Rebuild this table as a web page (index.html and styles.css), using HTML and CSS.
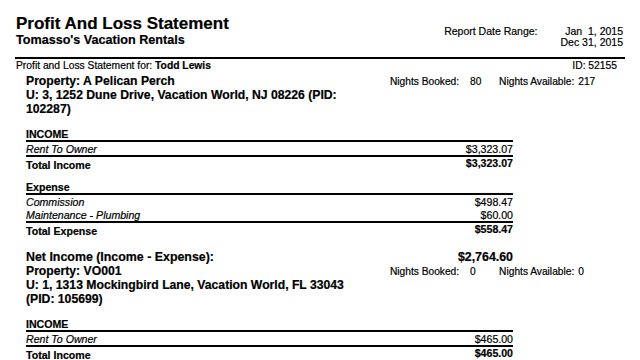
FILE: index.html
```
<!DOCTYPE html>
<html>
<head>
<meta charset="utf-8">
<link rel="stylesheet" href="styles.css">
</head>
<body>
<div class="page">
  <header class="top">
    <div class="titles">
      <h1 class="title">Profit And Loss Statement</h1>
      <h2 class="subtitle">Tomasso's Vacation Rentals</h2>
    </div>
    <div class="range">
      <span class="range-label">Report Date Range:</span>
      <div class="dates"><div>Jan&nbsp;&nbsp;1, 2015</div><div>Dec 31, 2015</div></div>
    </div>
  </header>
  <div class="rule"></div>
  <div class="forline">
    <span>Profit and Loss Statement for: <b>Todd Lewis</b></span>
    <span>ID: 52155</span>
  </div>

  <section class="prop">
    <div class="prop-head">
      <div class="prop-info">
        <div>Property: A Pelican Perch</div>
        <div>U: 3, 1252 Dune Drive, Vacation World, NJ 08226 (PID: 102287)</div>
      </div>
      <div class="nights">
        <span>Nights Booked:</span><span class="nv1">80</span>
        <span>Nights Available:</span><span class="nv2">217</span>
      </div>
    </div>

    <div class="cat">
      <div class="row head"><span>INCOME</span></div>
      <div class="row item bordered"><span class="lbl">Rent To Owner</span><span class="amt">$3,323.07</span></div>
      <div class="row total"><span class="lbl">Total Income</span><span class="amt">$3,323.07</span></div>
    </div>
    <div class="cat next">
      <div class="row head"><span>Expense</span></div>
      <div class="row item"><span class="lbl">Commission</span><span class="amt">$498.47</span></div>
      <div class="row item bordered"><span class="lbl">Maintenance - Plumbing</span><span class="amt">$60.00</span></div>
      <div class="row total"><span class="lbl">Total Expense</span><span class="amt">$558.47</span></div>
    </div>
    <div class="net"><span>Net Income (Income - Expense):</span><span>$2,764.60</span></div>
  </section>

  <section class="prop second">
    <div class="prop-head">
      <div class="prop-info">
        <div>Property: VO001</div>
        <div>U: 1, 1313 Mockingbird Lane, Vacation World, FL 33043 (PID: 105699)</div>
      </div>
      <div class="nights">
        <span>Nights Booked:</span><span class="nv1">0</span>
        <span>Nights Available:</span><span class="nv2">0</span>
      </div>
    </div>

    <div class="cat">
      <div class="row head"><span>INCOME</span></div>
      <div class="row item bordered"><span class="lbl">Rent To Owner</span><span class="amt">$465.00</span></div>
      <div class="row total"><span class="lbl">Total Income</span><span class="amt">$465.00</span></div>
    </div>
  </section>
</div>
</body>
</html>
```
FILE: styles.css
```
* { box-sizing: border-box; }
html, body { margin: 0; padding: 0; background: #fff; }
body {
  font-family: "Liberation Sans", Arial, sans-serif;
  color: #000;
  width: 640px;
  height: 360px;
  overflow: hidden;
  -webkit-text-stroke: 0.2px #000;
}
.page { padding: 14px 15px 0 15px; }

.top {
  display: flex;
  justify-content: space-between;
  align-items: flex-end;
  padding: 0 2px 0 1px;
}
.title {
  margin: 0;
  font-size: 17px;
  line-height: 19px;
  font-weight: bold;
}
.subtitle {
  margin: 0;
  font-size: 12.6px;
  line-height: 15px;
  font-weight: bold;
}
.range {
  display: flex;
  align-items: flex-start;
  font-size: 10.5px;
  line-height: 10.5px;
  padding-bottom: 1px;
}
.range-label { margin-right: 23px; }
.dates { text-align: right; white-space: nowrap; }

.rule {
  height: 2px;
  background: #000;
  margin-top: 9px;
}
.forline {
  display: flex;
  justify-content: space-between;
  font-size: 10.3px;
  line-height: 12px;
  margin-top: 1px;
  padding: 0 8px 0 1px;
}

.prop { padding-left: 11px; width: 498px; }
.prop-head {
  display: grid;
  grid-template-columns: 330px auto;
  column-gap: 34px;
  align-items: baseline;
  margin-top: 2px;
  width: 600px;
}
.second .prop-head { margin-top: 0; }
.prop-info {
  font-size: 12.2px;
  line-height: 14px;
  font-weight: bold;
}
.nights {
  display: flex;
  font-size: 10.2px;
  line-height: 12px;
  white-space: nowrap;
}
.nv1 { width: 40px; padding-left: 11px; }
.nv2 { padding-left: 4px; }

.cat { margin-top: 11px; font-size: 10.6px; }
.cat.next { margin-top: 11px; }
.row {
  display: flex;
  justify-content: space-between;
  align-items: flex-start;
  height: 13px;
  line-height: 12px;
  padding-top: 1px;
}
.row.head {
  font-weight: bold;
  height: 15px;
  border-bottom: 2px solid #000;
}
.row.bordered {
  height: 15px;
  border-bottom: 2px solid #000;
}
.row.item .lbl { font-style: italic; }
.row.total { font-weight: bold; padding-top: 0; height: 12px; }
.row.total .lbl { padding-top: 2px; }

.net {
  display: flex;
  justify-content: space-between;
  font-size: 12.4px;
  line-height: 14px;
  font-weight: bold;
  margin-top: 15px;
}
```
